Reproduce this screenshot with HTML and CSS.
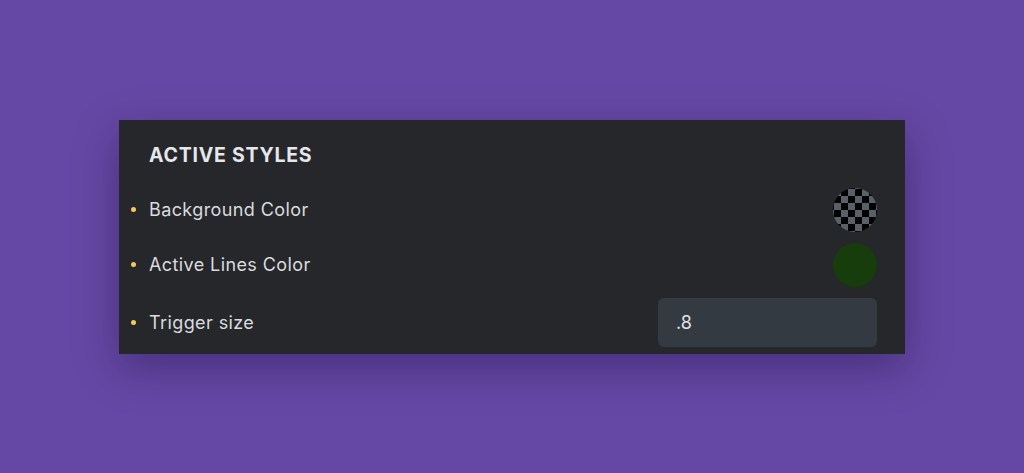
FILE: index.html
```html
<!DOCTYPE html>
<html lang="en">
  <head>
    <meta charset="UTF-8" />
    <meta name="viewport" content="width=device-width, initial-scale=1.0" />
    <title>active styles</title>
    <link rel="stylesheet" href="styles.css">
  </head>
  <body>
    <div id="panel">
      <h2 class="title">ACTIVE STYLES</h2>
      <div class="row">
        <span class="dot"></span>
        <span class="label">Background Color</span>
        <span class="swatch checker"></span>
      </div>
      <div class="row">
        <span class="dot"></span>
        <span class="label">Active Lines Color</span>
        <span class="swatch green"></span>
      </div>
      <div class="row row-input">
        <span class="dot"></span>
        <span class="label">Trigger size</span>
        <input class="field" type="text" value=".8" />
      </div>
    </div>
  </body>
</html>
```

FILE: styles.css
```css
body {
  margin: 0;
  min-height: 100vh;
  background: #6548a5;
  display: flex;
  justify-content: center;
  align-items: center;
  font-family: Inter, "Noto Sans", sans-serif;
}
#panel {
  width: 786px;
  box-sizing: border-box;
  background: #25272b;
  padding: 23px 28px 7px 12px;
  box-shadow: 0 14px 40px rgba(30, 15, 60, 0.4);
  display: flex;
  flex-direction: column;
  gap: 11px;
}
.title {
  margin: 0 0 10px 18px;
  font-size: 19.5px;
  line-height: 24px;
  font-weight: 700;
  letter-spacing: 0.75px;
  color: #e6e7ea;
}
.row {
  display: flex;
  align-items: center;
  height: 44px;
}
.row-input {
  height: 49px;
}
.dot {
  width: 5px;
  height: 5px;
  border-radius: 50%;
  background: #f4c85a;
  margin-right: 13px;
}
.label {
  flex: 1;
  font-size: 18px;
  letter-spacing: 0.4px;
  color: #dadbde;
}
.swatch {
  width: 44px;
  height: 44px;
  border-radius: 50%;
}
.checker {
  background-color: #5b6068;
  background-image:
    linear-gradient(45deg, #000 25%, transparent 25%, transparent 75%, #000 75%),
    linear-gradient(45deg, #000 25%, transparent 25%, transparent 75%, #000 75%);
  background-size: 14px 14px;
  background-position: 1px 1px, 8px 8px;
}
.green {
  background: #163d0b;
}
.field {
  width: 219px;
  height: 49px;
  box-sizing: border-box;
  border: none;
  border-radius: 6px;
  background: #343a41;
  color: #e2e3e6;
  font-family: Inter, "Noto Sans", sans-serif;
  font-size: 18px;
  padding: 0 18px;
  outline: none;
}
```
